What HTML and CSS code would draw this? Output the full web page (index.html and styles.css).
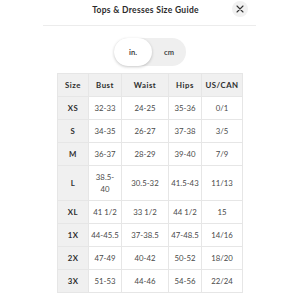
FILE: index.html
```html
<!DOCTYPE html>
<html lang="en">
<head>
    <meta charset="UTF-8">
    <title>Tops &amp; Dresses Size Guide</title>
    <link rel="stylesheet" href="styles.css">
</head>
<body>
    <div class="sheet">
        <div class="sheet-header">
            <span></span>
            <h1>Tops &amp; Dresses Size Guide</h1>
            <button class="close-btn" aria-label="Close">
                <svg width="8" height="8" viewBox="0 0 8 8"><path d="M1 1L7 7M7 1L1 7" stroke="#333" stroke-width="1.1" stroke-linecap="round"/></svg>
            </button>
        </div>

        <div class="unit-toggle">
            <span class="unit active">in.</span>
            <span class="unit">cm</span>
        </div>

        <table class="size-table">
            <colgroup>
                <col style="width:31px">
                <col style="width:33px">
                <col style="width:47px">
                <col style="width:33px">
                <col style="width:41px">
            </colgroup>
            <thead>
                <tr><th>Size</th><th>Bust</th><th>Waist</th><th>Hips</th><th>US/CAN</th></tr>
            </thead>
            <tbody>
                <tr><th>XS</th><td>32-33</td><td>24-25</td><td>35-36</td><td>0/1</td></tr>
                <tr><th>S</th><td>34-35</td><td>26-27</td><td>37-38</td><td>3/5</td></tr>
                <tr><th>M</th><td>36-37</td><td>28-29</td><td>39-40</td><td>7/9</td></tr>
                <tr><th>L</th><td>38.5-<br>40</td><td>30.5-32</td><td>41.5-43</td><td>11/13</td></tr>
                <tr><th>XL</th><td>41 1/2</td><td>33 1/2</td><td>44 1/2</td><td>15</td></tr>
                <tr><th>1X</th><td>44-45.5</td><td>37-38.5</td><td>47-48.5</td><td>14/16</td></tr>
                <tr><th>2X</th><td>47-49</td><td>40-42</td><td>50-52</td><td>18/20</td></tr>
                <tr><th>3X</th><td>51-53</td><td>44-46</td><td>54-56</td><td>22/24</td></tr>
            </tbody>
        </table>
    </div>
</body>
</html>
```

FILE: styles.css
```css
body {
    margin: 0;
    padding: 0;
    background: #fff;
    font-family: Lato, "Liberation Sans", sans-serif;
    color: #333;
}

.sheet {
    width: 300px;
}

.sheet-header {
    display: grid;
    grid-template-columns: 16px 1fr 16px;
    align-items: center;
    margin: 0 44px 0 43px;
    height: 20px;
    padding: 0 8px 5px 0;
    border-bottom: 1px solid #ececec;
}

.sheet-header h1 {
    margin: 0;
    font-size: 8.5px;
    font-weight: 700;
    text-align: center;
    letter-spacing: 0.3px;
    color: #2b2b2b;
}

.close-btn {
    width: 16px;
    height: 16px;
    padding: 0;
    border: none;
    border-radius: 50%;
    background: #f1f1f1;
    display: flex;
    align-items: center;
    justify-content: center;
    margin-top: -2px;
}

.unit-toggle {
    display: flex;
    width: 72px;
    height: 28px;
    margin: 12px auto 7px;
    border-radius: 14px;
    background: #efefef;
}

.unit {
    flex: 1;
    display: flex;
    align-items: center;
    justify-content: center;
    font-size: 7.5px;
    font-weight: 700;
    color: #444;
}

.unit.active {
    flex: 0 0 38px;
    background: #fff;
    border-radius: 14px;
    box-shadow: 0 1px 3px rgba(0, 0, 0, 0.22);
}

.size-table {
    margin: 0 auto;
    width: 185px;
    table-layout: fixed;
    border-collapse: collapse;
    font-size: 7.8px;
    line-height: 12px;
    text-align: center;
}

.size-table th,
.size-table td {
    border: 1px solid #e6e6e6;
    padding: 5px 2px;
    vertical-align: middle;
}

.size-table th {
    background: #f0f0f0;
    font-weight: 700;
    letter-spacing: 0.5px;
    color: #2e2e2e;
}

.size-table td {
    color: #4a4a4a;
    background: #fff;
}
```
